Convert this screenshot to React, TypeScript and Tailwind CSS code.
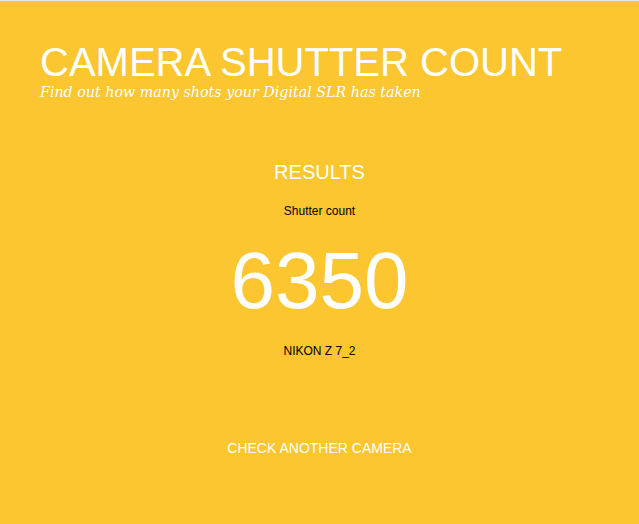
export default function App() {
    return (
        <main className="min-h-screen border-t border-[#e4e4e4] bg-[#fbc62f] font-['Liberation_Sans',Arial,sans-serif]">
            {/* header */}
            <header className="px-10 pt-[41px]">
                <h1 className="text-[40px] leading-none font-normal text-white">CAMERA SHUTTER COUNT</h1>
                <p className="mt-[3px] font-['DejaVu_Serif',Georgia,serif] text-[14.25px] leading-none italic text-white">
                    Find out how many shots your Digital SLR has taken
                </p>
            </header>

            {/* results */}
            <section className="mt-[63px] flex flex-col items-center text-center">
                <h2 className="text-[20px] leading-none text-white">RESULTS</h2>
                <p className="mt-[23px] text-[12px] leading-none text-black">Shutter count</p>
                <p className="mt-[24px] text-[80px] leading-none text-white">6350</p>
                <p className="mt-[24px] text-[12px] leading-none text-black">NIKON Z 7_2</p>
                <a href="#" className="mt-[84px] text-[14px] leading-none text-white">
                    CHECK ANOTHER CAMERA
                </a>
            </section>
        </main>
    );
}
